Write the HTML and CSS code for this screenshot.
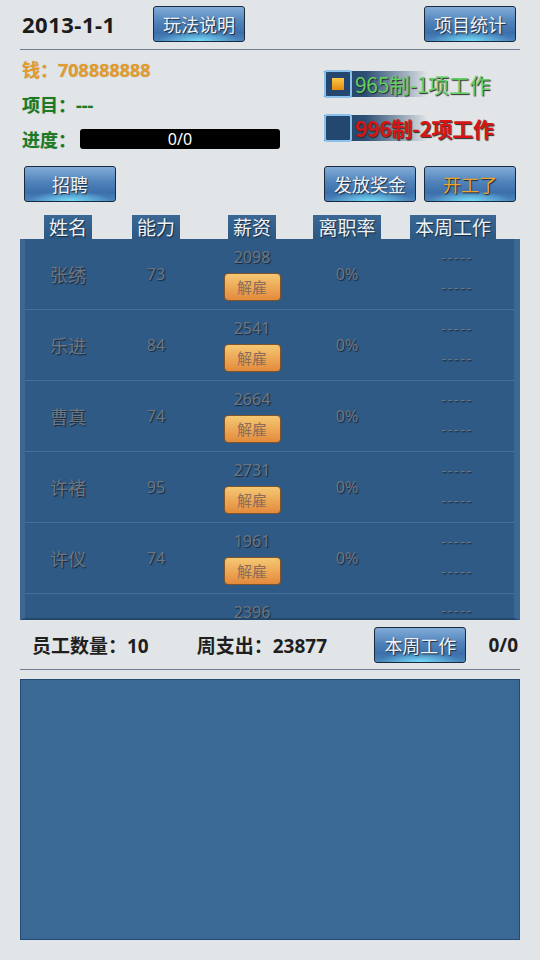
FILE: index.html
```html
<!DOCTYPE html>
<html lang="zh-cn">
<head>
    <meta charset="UTF-8">
    <meta name="viewport" content="width=device-width, initial-scale=1.0">
    <title>公司模拟</title>
    <link rel="stylesheet" href="styles.css">
</head>
<body>
    <div class="tela">
        <!-- Topo: data e botões -->
        <div class="topo">
            <span class="data">2013-1-1</span>
            <button class="botao botao-ajuda">玩法说明</button>
            <button class="botao">项目统计</button>
        </div>

        <!-- Informações do jogador e regime de trabalho -->
        <div class="info">
            <div class="status">
                <p class="linha dinheiro">钱：708888888</p>
                <p class="linha verde">项目：---</p>
                <p class="linha verde">进度：<span class="barra">0/0</span></p>
            </div>
            <div class="regimes">
                <label class="regime">
                    <span class="caixa marcada"></span>
                    <span class="texto-regime verde-claro">965制-1项工作</span>
                </label>
                <label class="regime">
                    <span class="caixa"></span>
                    <span class="texto-regime vermelho">996制-2项工作</span>
                </label>
            </div>
        </div>

        <div class="acoes">
            <button class="botao">招聘</button>
            <span class="espaco"></span>
            <button class="botao">发放奖金</button>
            <button class="botao botao-laranja">开工了</button>
        </div>

        <!-- Cabeçalho da tabela -->
        <div class="cabecalho">
            <span><b>姓名</b></span>
            <span><b>能力</b></span>
            <span><b>薪资</b></span>
            <span><b>离职率</b></span>
            <span><b>本周工作</b></span>
        </div>

        <div class="tabela">
            <div class="fila">
                <span class="nome">张绣</span>
                <span class="num">73</span>
                <div class="salario"><span class="num">2098</span><button class="demitir">解雇</button></div>
                <span class="num">0%</span>
                <div class="trabalho"><span>-----</span><span>-----</span></div>
            </div>
            <div class="fila">
                <span class="nome">乐进</span>
                <span class="num">84</span>
                <div class="salario"><span class="num">2541</span><button class="demitir">解雇</button></div>
                <span class="num">0%</span>
                <div class="trabalho"><span>-----</span><span>-----</span></div>
            </div>
            <div class="fila">
                <span class="nome">曹真</span>
                <span class="num">74</span>
                <div class="salario"><span class="num">2664</span><button class="demitir">解雇</button></div>
                <span class="num">0%</span>
                <div class="trabalho"><span>-----</span><span>-----</span></div>
            </div>
            <div class="fila">
                <span class="nome">许褚</span>
                <span class="num">95</span>
                <div class="salario"><span class="num">2731</span><button class="demitir">解雇</button></div>
                <span class="num">0%</span>
                <div class="trabalho"><span>-----</span><span>-----</span></div>
            </div>
            <div class="fila">
                <span class="nome">许仪</span>
                <span class="num">74</span>
                <div class="salario"><span class="num">1961</span><button class="demitir">解雇</button></div>
                <span class="num">0%</span>
                <div class="trabalho"><span>-----</span><span>-----</span></div>
            </div>
            <!-- Última linha, cortada pela rolagem -->
            <div class="fila cortada">
                <span></span>
                <span></span>
                <div class="salario"><span class="num">2396</span></div>
                <span></span>
                <div class="trabalho"><span>-----</span></div>
            </div>
        </div>

        <!-- Rodapé com totais -->
        <div class="rodape">
            <span class="total">员工数量：10</span>
            <span class="total gasto">周支出：23877</span>
            <button class="botao">本周工作</button>
            <span class="total progresso">0/0</span>
        </div>

        <div class="painel"></div>
    </div>
</body>
</html>
```

FILE: styles.css
```css
*{
    margin: 0;
    padding: 0;
    box-sizing: border-box;
}
body{
    background-color: #e1e5e7;
    font-family: "Noto Sans", "Noto Sans CJK SC", sans-serif;
}
.tela{
    padding: 0 20px;
    width: 540px;
    height: 960px;
}
/* Botões azuis */
.botao{
    width: 92px;
    height: 36px;
    border: 1px solid #1b2a3b;
    border-radius: 3px;
    background:
        radial-gradient(ellipse 45% 30% at 50% 100%, rgba(120, 230, 255, 0.9), rgba(120, 230, 255, 0) 100%),
        linear-gradient(#82acd8, #4f82ba 45%, #3d70aa 75%, #4c86c0);
    color: #eef3f8;
    font-family: "Noto Sans CJK SC", sans-serif;
    font-size: 18px;
    text-shadow: 1px 1px 1px #1b2a3b;
    cursor: pointer;
}
.botao-laranja{
    color: #f2a428;
}
.topo{
    display: flex;
    align-items: center;
    height: 50px;
    padding: 0 4px 2px 2px;
    border-bottom: 1px solid #6e7f95;
}
.data{
    font-size: 22px;
    font-weight: bold;
    color: #1c1c1c;
    width: 131px;
    letter-spacing: 0.5px;
}
.botao-ajuda{
    margin-right: auto;
}
.info{
    display: flex;
    justify-content: space-between;
    height: 110px;
}
.status{
    padding-left: 2px;
    padding-top: 1px;
}
.linha{
    display: flex;
    align-items: center;
    height: 35px;
    font-size: 18px;
    font-weight: bold;
    text-shadow: 0 0 1px rgba(0, 0, 0, 0.25);
}
.dinheiro{
    color: #e39b2b;
}
.verde{
    color: #1b7a22;
}
.barra{
    width: 200px;
    height: 20px;
    margin-left: 4px;
    background-color: #000;
    border-radius: 3px;
    color: #fff;
    font-size: 16px;
    font-weight: normal;
    line-height: 20px;
    text-align: center;
}
.regimes{
    display: flex;
    flex-direction: column;
    gap: 16px;
    width: 196px;
    padding-top: 20px;
}
.regime{
    display: flex;
    align-items: center;
    height: 28px;
    background: linear-gradient(90deg, #1c3b60 0%, #2d4f75 40%, rgba(225, 229, 231, 0) 100%);
    background-size: 104px 26px;
    background-repeat: no-repeat;
    background-position: 0 1px;
}
.caixa{
    display: flex;
    align-items: center;
    justify-content: center;
    width: 28px;
    height: 28px;
    border: 2px solid #8cc2ea;
    border-radius: 3px;
    background-color: #24476f;
}
.marcada::after{
    content: "";
    width: 12px;
    height: 12px;
    background: linear-gradient(#fbc844, #e58a12);
}
.texto-regime{
    margin-left: 3px;
    font-family: "Noto Sans CJK SC", sans-serif;
    font-size: 21px;
    text-shadow: 1px 1px 1px #2a2a2a;
    letter-spacing: -0.3px;
}
.verde-claro{
    color: #5fcf63;
}
.vermelho{
    color: #d61616;
    font-weight: bold;
}
.acoes{
    display: flex;
    gap: 8px;
    padding: 6px 4px 0 4px;
}
.espaco{
    flex: 1;
}
/* Tabela dos funcionários */
.cabecalho, .fila{
    display: grid;
    grid-template-columns: 96px 80px 112px 78px 134px;
    align-items: center;
    justify-items: center;
}
.cabecalho{
    margin-top: 13px;
    height: 24px;
}
.cabecalho b{
    display: block;
    padding: 0 5px;
    height: 24px;
    line-height: 24px;
    background: linear-gradient(#3a6894, #2c5882);
    color: #edf2f7;
    font-family: "Noto Sans CJK SC", sans-serif;
    font-size: 19px;
    font-weight: normal;
    text-shadow: 1px 1px 1px #15283d;
}
.tabela{
    height: 381px;
    overflow: hidden;
    background-color: #2f5a85;
    border-left: 5px solid #3b6791;
    border-right: 6px solid #3c6994;
    border-bottom: 2px solid #24476c;
}
.fila{
    height: 71px;
    border-bottom: 1px solid #41709c;
    margin-left: -5px;
    color: #6c7682;
    text-shadow: 1px 1px 1px #15273b;
}
.cortada{
    border-bottom: none;
    align-items: start;
    padding-top: 7px;
}
.nome{
    font-family: "Noto Sans CJK SC", sans-serif;
    font-size: 18px;
}
.num{
    font-size: 16px;
}
.salario{
    display: flex;
    flex-direction: column;
    align-items: center;
    gap: 5px;
    padding-bottom: 2px;
}
.demitir{
    width: 57px;
    height: 28px;
    border: 1px solid #7f5428;
    border-radius: 4px;
    background: linear-gradient(#f5c873, #e48a3c);
    color: #8b6c58;
    font-family: "Noto Sans CJK SC", sans-serif;
    font-size: 15px;
    text-shadow: none;
}
.trabalho{
    display: flex;
    flex-direction: column;
    gap: 12px;
    padding-bottom: 4px;
    padding-left: 8px;
    font-size: 15px;
    line-height: 18px;
    letter-spacing: 1.5px;
}
.cortada .trabalho{
    padding: 0 0 0 8px;
}
.rodape{
    display: flex;
    align-items: center;
    height: 50px;
    padding: 0 2px 0 12px;
    border-bottom: 1px solid #6e7f95;
}
.total{
    font-size: 19px;
    font-weight: bold;
    color: #1f1f1f;
}
.gasto{
    margin-left: 48px;
    margin-right: auto;
}
.progresso{
    margin-left: 22px;
}
.painel{
    margin-top: 9px;
    height: 261px;
    background-color: #3b6995;
    border: 1px solid #244a73;
}
```
